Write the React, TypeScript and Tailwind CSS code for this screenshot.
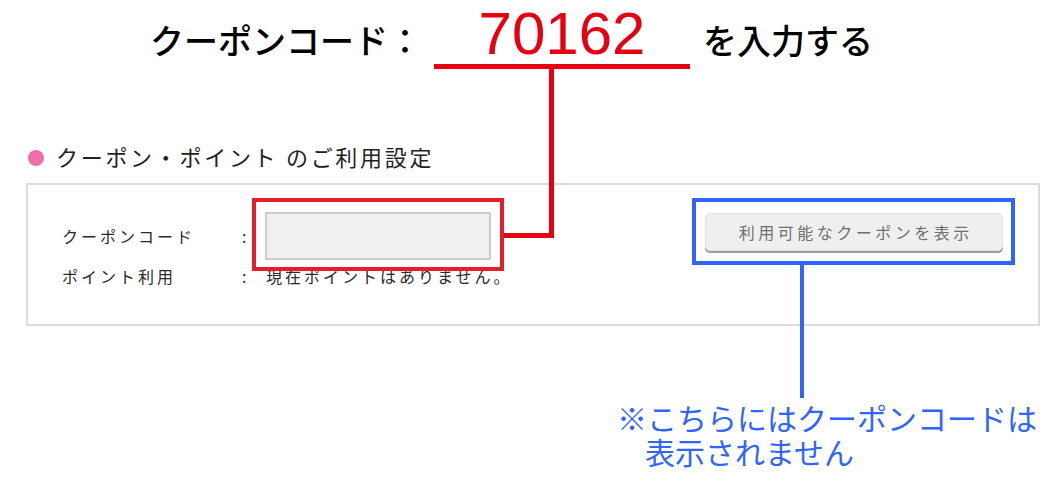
import React from "react";

export default function App() {
  return (
    <div className="relative w-[1062px] h-[484px] overflow-hidden bg-white font-['Noto_Sans_CJK_JP',sans-serif] text-black">
      {/* Instruction line: coupon code to enter */}
      <div className="flex items-baseline pl-[150px] pt-[4px]">
        <span className="text-[34px] font-medium leading-none">クーポンコード：</span>
        <div className="ml-[12px] w-[256px] border-b-[5px] border-[#e60012] text-center font-['Liberation_Sans',sans-serif] text-[60px] leading-none text-[#e60012]">
          70162
        </div>
        <span className="ml-[13px] text-[34px] font-medium leading-none">を入力する</span>
      </div>

      {/* Section heading */}
      <div className="mt-[76px] flex items-start pl-[28px]">
        <span className="mt-[5px] h-[16px] w-[16px] rounded-full bg-[#f06eaa]" />
        <span className="ml-[12px] text-[22px] leading-none tracking-[2.7px] text-[#222]">
          クーポン・ポイント のご利用設定
        </span>
      </div>

      {/* Settings panel */}
      <div className="ml-[26px] mt-[16px] flex h-[143px] w-[1014px] justify-between border-2 border-[#dcdcdc] pl-[34px] pr-[35px] pt-[27px]">
        <div className="flex flex-col text-[16px] tracking-[3px] text-[#2a2a2a]">
          <div className="flex h-[48px] items-center">
            <span className="w-[180px]">クーポンコード</span>
            <span className="w-[23px]">:</span>
            <input
              type="text"
              readOnly
              className="h-[48px] w-[226px] border-2 border-[#cccccc] bg-[#f0f0f0] outline-none"
            />
          </div>
          <div className="mt-[4px] flex h-[24px] items-center leading-[24px]">
            <span className="w-[180px]">ポイント利用</span>
            <span className="w-[23px]">:</span>
            <span className="pl-[1px]">現在ポイントはありません。</span>
          </div>
        </div>
        <button
          type="button"
          className="mt-[1px] h-[38px] w-[298px] rounded-[5px] border border-[#e2e2e2] bg-[#efefef] pl-[3.5px] text-[16px] tracking-[3.5px] text-[#707070] shadow-[0_2px_0_#9c9c9c]"
        >
          利用可能なクーポンを表示
        </button>
      </div>

      {/* Note below the panel */}
      <div className="ml-[617px] mt-[74px] text-[30px] leading-[34px] text-[#2f64ff]">
        <div>※こちらにはクーポンコードは</div>
        <div className="pl-[28px]">表示されません</div>
      </div>

      {/* Callout lines and frames drawn over the form */}
      <div className="pointer-events-none absolute left-[549px] top-[64px] h-[174px] w-[5px] bg-[#e60012]" />
      <div className="pointer-events-none absolute left-[504px] top-[233px] h-[5px] w-[50px] bg-[#e60012]" />
      <div className="pointer-events-none absolute left-[252px] top-[198px] h-[73px] w-[252px] border-[4px] border-[#e41e2b]" />

      <div className="pointer-events-none absolute left-[692px] top-[198px] h-[67px] w-[323px] border-[4px] border-[#2f64ff]" />
      <div className="pointer-events-none absolute left-[800px] top-[265px] h-[133px] w-[4px] bg-[#2f64ff]" />
    </div>
  );
}
